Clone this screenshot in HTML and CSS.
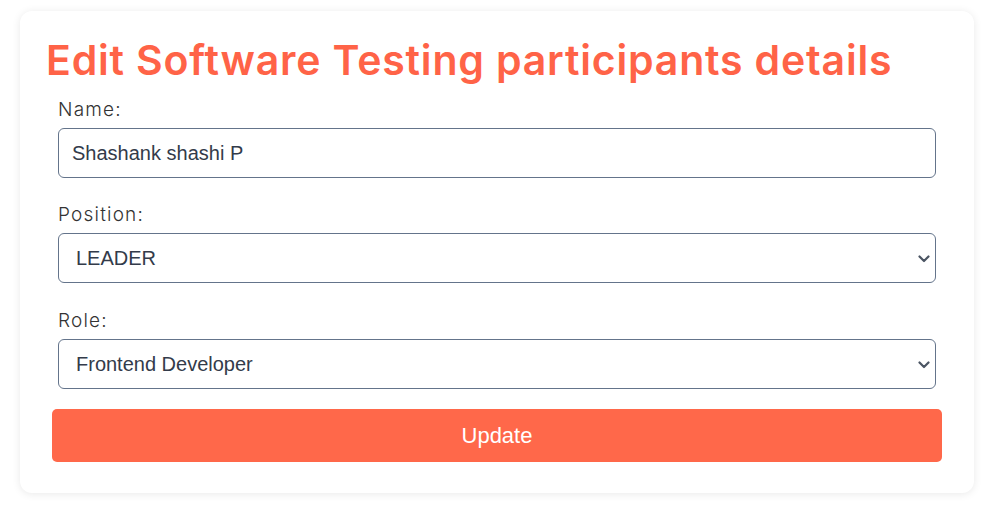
FILE: index.html
```html
<!DOCTYPE html>
<html lang="en">
<head>
<meta charset="utf-8">
<title>Edit participant</title>
<link rel="stylesheet" href="styles.css">
</head>
<body>
<div class="page">
  <div class="card">
    <h1 class="title">Edit Software Testing participants details</h1>
    <form class="form">
      <div class="field">
        <label class="label" for="name">Name:</label>
        <input class="control" id="name" type="text" value="Shashank shashi P">
      </div>
      <div class="field field-gap">
        <label class="label" for="position">Position:</label>
        <div class="select-wrap">
          <select class="control select" id="position">
            <option>LEADER</option>
            <option>MEMBER</option>
          </select>
          <svg class="chevron" width="12" height="8" viewBox="0 0 12 8"><path d="M1.5 1.5 L6 6 L10.5 1.5" fill="none" stroke="#4b5563" stroke-width="2.2" stroke-linecap="round" stroke-linejoin="round"/></svg>
        </div>
      </div>
      <div class="field field-last">
        <label class="label" for="role">Role:</label>
        <div class="select-wrap">
          <select class="control select" id="role">
            <option>Frontend Developer</option>
            <option>Backend Developer</option>
          </select>
          <svg class="chevron" width="12" height="8" viewBox="0 0 12 8"><path d="M1.5 1.5 L6 6 L10.5 1.5" fill="none" stroke="#4b5563" stroke-width="2.2" stroke-linecap="round" stroke-linejoin="round"/></svg>
        </div>
      </div>
      <button class="btn" type="button">Update</button>
    </form>
  </div>
</div>
</body>
</html>
```
FILE: styles.css
```css
* { box-sizing: border-box; }
html, body { margin: 0; background: #fff; }
.page {
  padding: 11px 10px 16px 20px;
}
.card {
  width: 954px;
  background: #fff;
  border-radius: 12px;
  box-shadow: 0 1px 8px rgba(0, 0, 0, 0.09);
  padding: 24px 32px 31px 32px;
}
.title {
  margin: 0 0 14px -6px;
  font-family: "Inter", "Noto Sans", sans-serif;
  font-weight: 560;
  font-size: 41px;
  line-height: 50px;
  color: #ff6347;
  letter-spacing: 0.82px;
  white-space: nowrap;
}
.form {
  display: flex;
  flex-direction: column;
}
.field {
  display: flex;
  flex-direction: column;
  margin: 0 6px 26px;
}
.field-gap { margin-bottom: 27px; }
.field-last { margin-bottom: 20px; }
.label {
  font-family: "Inter", "Noto Sans", sans-serif;
  font-weight: 300;
  font-size: 19px;
  line-height: 22px;
  color: #333;
  margin-bottom: 7px;
  letter-spacing: 1.2px;
}
.control {
  width: 100%;
  height: 50px;
  border: 1px solid #64748b;
  border-radius: 6px;
  background: #fff;
  font-family: "Liberation Sans", Arial, sans-serif;
  font-size: 20px;
  color: #333b4a;
  padding: 0 13px;
  outline: none;
}
.select-wrap {
  position: relative;
}
.select {
  appearance: none;
  -webkit-appearance: none;
  padding-left: 17px;
}
.chevron {
  position: absolute;
  right: 6px;
  top: 22px;
  pointer-events: none;
}
.btn {
  height: 53px;
  border: none;
  border-radius: 5px;
  background: #ff684a;
  color: #fff;
  font-family: "Liberation Sans", Arial, sans-serif;
  font-size: 22px;
  cursor: pointer;
}
```
